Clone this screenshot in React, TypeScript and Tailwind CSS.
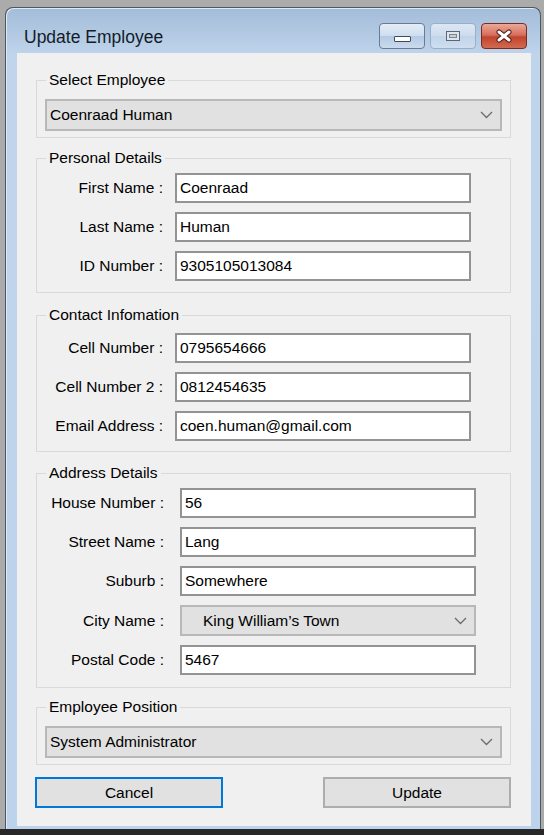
import React from "react";

const textFont = "font-['Liberation_Sans',Arial,sans-serif]";

function Chevron() {
  return (
    <svg width="13" height="8" viewBox="0 0 13 8" className="shrink-0">
      <polyline points="1,1 6.5,6.5 12,1" fill="none" stroke="#6b6b6b" strokeWidth="1.3" />
    </svg>
  );
}

function Combo({ value, indent = false, height = "h-[32px]" }: { value: string; indent?: boolean; height?: string }) {
  return (
    <div className={`flex ${height} items-center justify-between border-2 border-[#b8b8b8] bg-[#e1e1e1] pr-[7px]`}>
      <span className={indent ? "pl-[21px]" : "pl-[3px]"}>{value}</span>
      <Chevron />
    </div>
  );
}

function TextBox({ value }: { value: string }) {
  return (
    <div className="flex h-[30px] w-[296px] items-center border-2 border-[#939393] bg-white pl-[3px]">
      {value}
    </div>
  );
}

function Group({
  title,
  className,
  children,
}: {
  title: string;
  className: string;
  children: React.ReactNode;
}) {
  return (
    <fieldset className={`ml-[19px] mr-[20px] border border-[#d9d9d9] px-[8px] ${className}`}>
      <legend className="ml-[1px] px-[3px] leading-[20px]">{title}</legend>
      {children}
    </fieldset>
  );
}

function Row({ label, labelWidth, gap, children }: { label: string; labelWidth: string; gap: string; children: React.ReactNode }) {
  return (
    <div className={`flex items-center ${gap}`}>
      <span className={`${labelWidth} text-right whitespace-nowrap`}>{label}</span>
      {children}
    </div>
  );
}

export default function App() {
  const personal = [
    ["First Name :", "Coenraad"],
    ["Last Name :", "Human"],
    ["ID Number :", "9305105013084"],
  ];
  const contact = [
    ["Cell Number :", "0795654666"],
    ["Cell Number 2 :", "0812454635"],
    ["Email Address :", "coen.human@gmail.com"],
  ];

  return (
    <div className={`flex h-[835px] w-[544px] flex-col bg-[#ababab] text-[15.5px] text-black ${textFont}`}>
      <div className="flex flex-1 pl-[5px] pr-[3px] pt-[7px]">
        <div className="flex flex-1 flex-col rounded-t-[8px] border border-b-0 border-[#4e5661] bg-[linear-gradient(to_bottom,#a3bcd9_0px,#c0d5ec_48px,#bdd3eb_100%)] shadow-[inset_1px_1px_0_#dfe9f5]">
          {/* Title bar */}
          <div className="flex h-[45px] items-start pl-[18px] pr-[13px] pt-[15px]">
            <span className="mt-[1px] flex-1 text-[17.5px] leading-[26px] text-[#141c28]">Update Employee</span>
            <div className="flex gap-[5px]">
              <div className="flex h-[26px] w-[46px] items-end justify-center rounded-[4px] border border-[#6a7c95] bg-[linear-gradient(to_bottom,#e4edf7_0%,#cfdeef_48%,#b5cae3_52%,#cadbee_100%)] pb-[6px]">
                <div className="h-[6px] w-[17px] rounded-[1px] border border-[#3c4b5e] bg-white" />
              </div>
              <div className="flex h-[26px] w-[46px] items-center justify-center rounded-[4px] border border-[#9aaec7] bg-[linear-gradient(to_bottom,#dce7f3_0%,#cddcee_48%,#c1d4ea_52%,#cfdef0_100%)]">
                <div className="flex h-[10px] w-[14px] items-center justify-center border border-[#5d6672] bg-[#dfe5ec]">
                  <div className="h-[4px] w-[8px] border border-[#7c8591] bg-[#c9d0d9]" />
                </div>
              </div>
              <div className="flex h-[26px] w-[46px] items-center justify-center rounded-[4px] border border-[#7b2a22] bg-[linear-gradient(to_bottom,#e9a999_0%,#d7705c_45%,#c2442e_55%,#d26a4f_100%)]">
                <svg width="18" height="14" viewBox="0 0 18 14">
                  <path d="M4 3 L14 11 M14 3 L4 11" stroke="#4a1a14" strokeWidth="5" strokeLinecap="round" />
                  <path d="M4 3 L14 11 M14 3 L4 11" stroke="#ffffff" strokeWidth="3" strokeLinecap="round" />
                </svg>
              </div>
            </div>
          </div>

          {/* Client area */}
          <div className="flex flex-1 flex-col pb-[3px] pl-[11px] pr-[9px]">
            <div className="flex flex-1 flex-col bg-[#f0f0f0]">
              <Group title="Select Employee" className="mt-[17px] pb-[6px] pt-[9px]">
                <Combo value="Coenraad Human" />
              </Group>

              <Group title="Personal Details" className="mt-[10px] pb-[11px] pt-[5px]">
                <div className="flex flex-col gap-[9px]">
                  {personal.map(([label, value]) => (
                    <Row key={label} label={label} labelWidth="w-[118px]" gap="gap-[12px]">
                      <TextBox value={value} />
                    </Row>
                  ))}
                </div>
              </Group>

              <Group title="Contact Infomation" className="mt-[12px] pb-[10px] pt-[8px]">
                <div className="flex flex-col gap-[9px]">
                  {contact.map(([label, value]) => (
                    <Row key={label} label={label} labelWidth="w-[118px]" gap="gap-[12px]">
                      <TextBox value={value} />
                    </Row>
                  ))}
                </div>
              </Group>

              <Group title="Address Details" className="mt-[11px] pb-[12px] pt-[5px]">
                <div className="flex flex-col gap-[9px]">
                  <Row label="House Number :" labelWidth="w-[119px]" gap="gap-[16px]">
                    <TextBox value="56" />
                  </Row>
                  <Row label="Street Name :" labelWidth="w-[119px]" gap="gap-[16px]">
                    <TextBox value="Lang" />
                  </Row>
                  <Row label="Suburb :" labelWidth="w-[119px]" gap="gap-[16px]">
                    <TextBox value="Somewhere" />
                  </Row>
                  <Row label="City Name :" labelWidth="w-[119px]" gap="gap-[16px]">
                    <div className="w-[296px]">
                      <Combo value="King William’s Town" indent height="h-[31px]" />
                    </div>
                  </Row>
                  <Row label="Postal Code :" labelWidth="w-[119px]" gap="gap-[16px]">
                    <TextBox value="5467" />
                  </Row>
                </div>
              </Group>

              <Group title="Employee Position" className="mt-[9px] pb-[6px] pt-[9px]">
                <Combo value="System Administrator" />
              </Group>

              <div className="ml-[18px] mr-[20px] mt-[12px] flex justify-between">
                <button className="h-[31px] w-[188px] border-2 border-[#0078d7] bg-[#e1e1e1]">Cancel</button>
                <button className="h-[31px] w-[188px] border-2 border-[#adadad] bg-[#e1e1e1]">Update</button>
              </div>
            </div>
          </div>
        </div>
      </div>
      <div className="h-[6px] bg-[#282828]" />
    </div>
  );
}
